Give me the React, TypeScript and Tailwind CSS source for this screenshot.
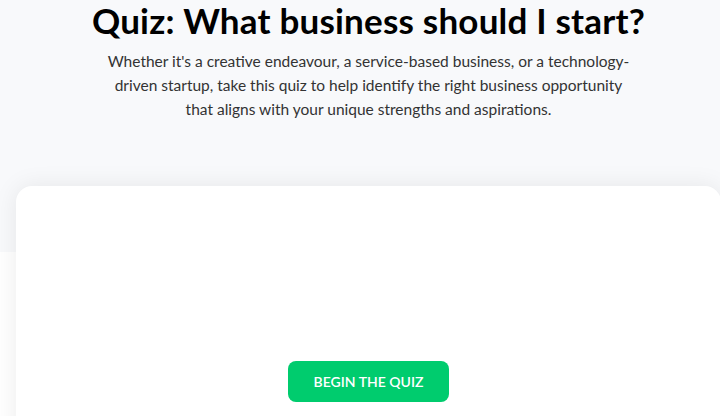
import React from 'react';

export default function App() {
    return (
        <div className="w-[720px] h-[416px] overflow-hidden bg-white" style={{ fontFamily: 'Lato, "Open Sans", sans-serif' }}>
            {/* hero */}
            <div className="bg-[#f8f9fb] h-[252px] pl-[17px] flex flex-col items-center">
                <h1 className="text-[35px] leading-[40px] font-bold text-black tracking-[0.2px]">
                    Quiz: What business should I start?
                </h1>
                <p className="mt-[9px] w-[528px] text-center text-[15.5px] leading-[24px] text-[#333333]">
                    Whether it's a creative endeavour, a service-based business, or a technology-driven startup, take this quiz to help identify the right business opportunity that aligns with your unique strengths and aspirations.
                </p>
            </div>

            {/* quiz card */}
            <div className="-mt-[66px] ml-4 w-[705px] h-[300px] bg-white rounded-2xl shadow-[0_0_24px_rgba(0,0,0,0.08)] flex flex-col items-center">
                <button className="mt-[175px] w-[161px] h-[41px] rounded-lg bg-[#00cc6e] text-white text-[14px] font-semibold uppercase">
                    Begin the quiz
                </button>
            </div>
        </div>
    );
}
